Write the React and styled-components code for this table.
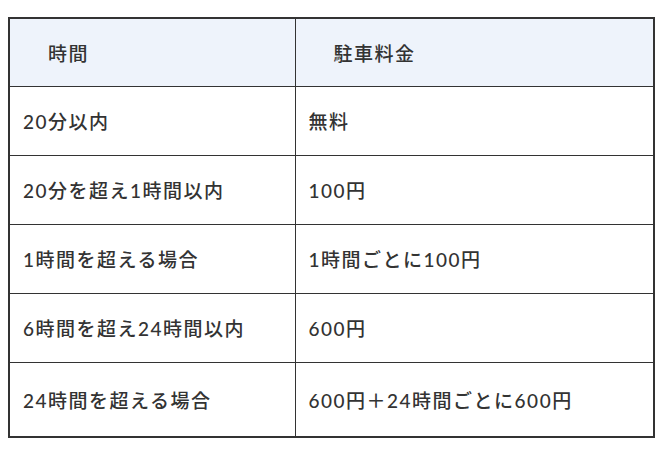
import React from 'react'
import styled, { createGlobalStyle } from 'styled-components'

const GlobalStyle = createGlobalStyle`
    body {
        margin: 0;
        background: #fff;
        font-family: "Lato", "Noto Sans CJK JP", sans-serif;
    }
`;

const Page = styled.div`
    padding: 17px 12px 0 8px;
`;

const Table = styled.table`
    width: 647px;
    table-layout: fixed;
    border-collapse: collapse;
    border: 2px solid #333;
    color: #333;
    font-size: 19px;
    font-weight: 500;
    letter-spacing: 1.5px;
`;

const Col = styled.col`
    width: ${({ $w }) => $w}px;
`;

const Row = styled.tr`
    height: ${({ $h }) => $h}px;
`;

const Head = styled.th`
    background-color: #eef3fb;
    border: 1px solid #333;
    text-align: left;
    font-weight: 500;
    padding: 0 0 0 38px;
`;

const Cell = styled.td`
    border: 1px solid #333;
    padding: 0 0 0 13px;
    vertical-align: middle;
`;

const rows = [
    ['20分以内', '無料'],
    ['20分を超え1時間以内', '100円'],
    ['1時間を超える場合', '1時間ごとに100円'],
    ['6時間を超え24時間以内', '600円'],
    ['24時間を超える場合', '600円＋24時間ごとに600円'],
];

function App() {
    return (
        <>
            <GlobalStyle />
            <Page>
                <Table>
                    <colgroup>
                        <Col $w={286} />
                        <Col />
                    </colgroup>
                    <thead>
                        <Row $h={68}>
                            <Head>時間</Head>
                            <Head>駐車料金</Head>
                        </Row>
                    </thead>
                    <tbody>
                        {rows.map(([time, fee], i) => (
                            <Row key={time} $h={i === rows.length - 1 ? 75 : 69}>
                                <Cell>{time}</Cell>
                                <Cell>{fee}</Cell>
                            </Row>
                        ))}
                    </tbody>
                </Table>
            </Page>
        </>
    )
}

export default App
